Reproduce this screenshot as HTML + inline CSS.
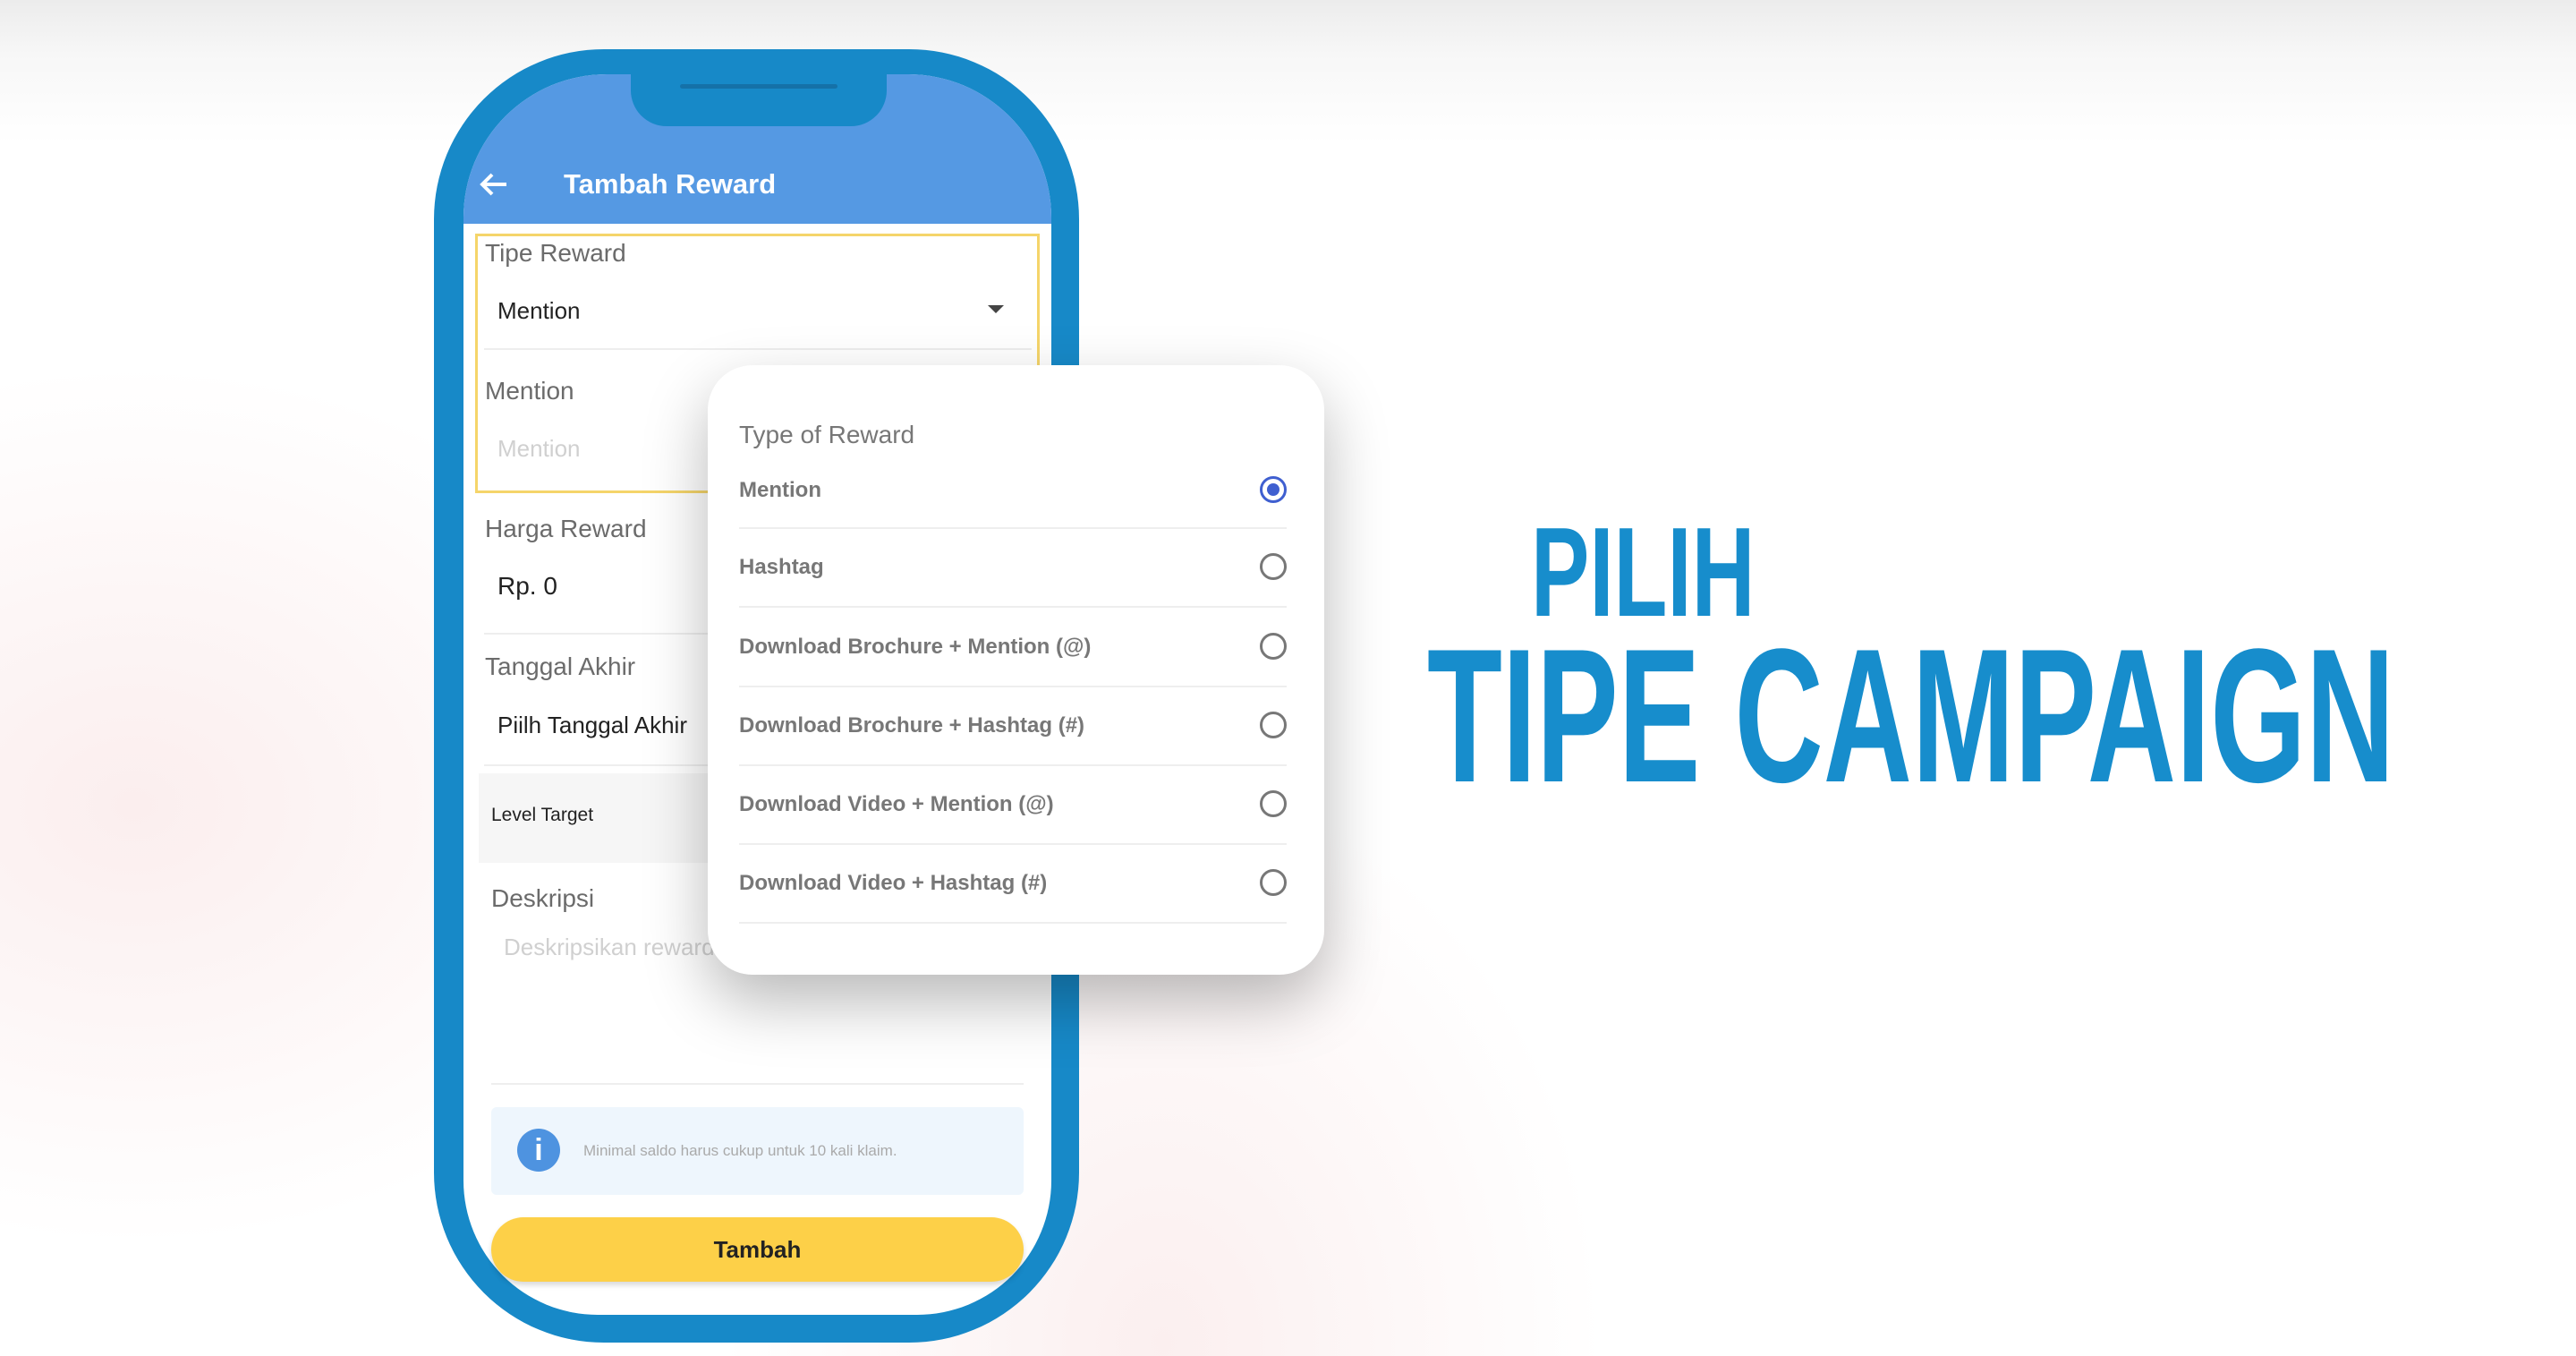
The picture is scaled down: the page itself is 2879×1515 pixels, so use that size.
<!DOCTYPE html>
<html><head><meta charset="utf-8"><style>
*{margin:0;padding:0;box-sizing:border-box}
body{width:2879px;height:1515px;overflow:hidden;position:relative;font-family:"Liberation Sans",sans-serif;background:#fff}
.bg{position:absolute;inset:0;background:
radial-gradient(ellipse 900px 700px at 150px 900px,#fbeeee 0%,rgba(251,238,238,0) 70%),
radial-gradient(ellipse 700px 900px at 1300px 1500px,#fbefef 0%,rgba(251,239,239,0) 70%),
linear-gradient(180deg,#ececec 0px,#f7f7f7 60px,rgba(255,255,255,0) 160px)}
.a{position:absolute;white-space:nowrap}
.phone{position:absolute;left:485px;top:55px;width:721px;height:1445px;border-radius:190px;background:#1789c8}
.screen{position:absolute;left:518px;top:83px;width:657px;height:1386px;border-radius:160px 160px 150px 150px;background:#fff;overflow:hidden}
.hdr{position:absolute;left:0;top:0;width:657px;height:167px;background:#5599e3}
.notch{position:absolute;left:705px;top:70px;width:286px;height:71px;background:#1789c8;border-radius:0 0 40px 40px}
.lbl{color:#6b6b6b;font-size:28px}
.val{color:#222;font-size:26px}
.line{position:absolute;height:2px;background:#eee}
.dlg{position:absolute;left:791px;top:408px;width:689px;height:681px;background:#fff;border-radius:50px;box-shadow:0 30px 70px rgba(0,0,0,.28)}
.opt{position:absolute;left:35px;color:#777;font-size:24px;font-weight:bold}
.rad{position:absolute;left:617px;width:30px;height:30px;border:3px solid #777;border-radius:50%}
.div{position:absolute;left:35px;width:612px;height:2px;background:#eee}
.big{position:absolute;color:#178dcc;font-weight:bold;transform-origin:0 0;white-space:nowrap;line-height:1}
</style></head><body>
<div class="bg"></div>
<div class="phone"></div>
<div class="screen">
 <div class="hdr"></div>
</div>
<div class="notch"><div style="position:absolute;left:55px;top:24px;width:176px;height:5px;border-radius:3px;background:#1571a8"></div></div>
<svg class="a" style="left:536px;top:192px" width="32" height="28" viewBox="0 0 32 28"><path d="M30 14H4M14 3L3 14l11 11" stroke="#fff" stroke-width="4" fill="none"/></svg>
<div class="a" style="left:630px;top:188px;color:#fff;font-size:31px;font-weight:bold">Tambah Reward</div>
<div class="a" style="left:531px;top:261px;width:631px;height:290px;border:3px solid #f5d56a"></div>
<div class="a lbl" style="left:542px;top:267px">Tipe Reward</div>
<div class="a val" style="left:556px;top:332px">Mention</div>
<svg class="a" style="left:1104px;top:341px" width="18" height="10"><path d="M0 0h18L9 9z" fill="#444"/></svg>
<div class="line" style="left:541px;top:389px;width:612px"></div>
<div class="a lbl" style="left:542px;top:421px">Mention</div>
<div class="a" style="left:556px;top:486px;color:#d0d0d0;font-size:26px">Mention</div>
<div class="a lbl" style="left:542px;top:575px">Harga Reward</div>
<div class="a val" style="left:556px;top:639px;font-size:28px">Rp. 0</div>
<div class="line" style="left:541px;top:707px;width:612px"></div>
<div class="a lbl" style="left:542px;top:729px">Tanggal Akhir</div>
<div class="a val" style="left:556px;top:795px">Piilh Tanggal Akhir</div>
<div class="line" style="left:541px;top:854px;width:612px"></div>
<div class="a" style="left:535px;top:864px;width:620px;height:100px;background:#f6f6f6"></div>
<div class="a" style="left:549px;top:899px;font-size:21px;color:#222">Level Target</div>
<div class="a lbl" style="left:549px;top:988px">Deskripsi</div>
<div class="a" style="left:563px;top:1043px;color:#d0d0d0;font-size:26px">Deskripsikan reward</div>
<div class="line" style="left:549px;top:1210px;width:595px"></div>
<div class="a" style="left:549px;top:1237px;width:595px;height:98px;background:#eef6fd;border-radius:6px"></div>
<div class="a" style="left:578px;top:1261px;width:48px;height:48px;border-radius:50%;background:#4e93e0;color:#fff;font-size:34px;font-weight:bold;text-align:center;line-height:48px">i</div>
<div class="a" style="left:652px;top:1276px;font-size:17px;color:#aaa">Minimal saldo harus cukup untuk 10 kali klaim.</div>
<div class="a" style="left:549px;top:1360px;width:595px;height:72px;border-radius:36px;background:#fdd048;box-shadow:0 4px 6px rgba(0,0,0,.15);text-align:center;line-height:72px;font-size:26px;font-weight:bold;color:#222">Tambah</div>
<div class="dlg">
 <div class="a" style="left:35px;top:62px;color:#777;font-size:28px">Type of Reward</div>
 <div class="opt" style="top:126px">Mention</div>
 <div class="rad" style="top:124px;border-color:#3f5fd0"><div style="position:absolute;left:5px;top:5px;width:14px;height:14px;border-radius:50%;background:#3f5fd0"></div></div>
 <div class="div" style="top:181px"></div>
 <div class="opt" style="top:212px">Hashtag</div><div class="rad" style="top:210px"></div>
 <div class="div" style="top:269px"></div>
 <div class="opt" style="top:301px">Download Brochure + Mention (@)</div><div class="rad" style="top:299px"></div>
 <div class="div" style="top:358px"></div>
 <div class="opt" style="top:389px">Download Brochure + Hashtag (#)</div><div class="rad" style="top:387px"></div>
 <div class="div" style="top:446px"></div>
 <div class="opt" style="top:477px">Download Video + Mention (@)</div><div class="rad" style="top:475px"></div>
 <div class="div" style="top:534px"></div>
 <div class="opt" style="top:565px">Download Video + Hashtag (#)</div><div class="rad" style="top:563px"></div>
 <div class="div" style="top:622px"></div>
</div>
<div class="big" style="left:1711px;top:569px;font-size:142px;transform:scaleX(.69)">PILIH</div>
<div class="big" style="left:1595px;top:694px;font-size:213px;transform:scaleX(.645)">TIPE CAMPAIGN</div>
</body></html>
